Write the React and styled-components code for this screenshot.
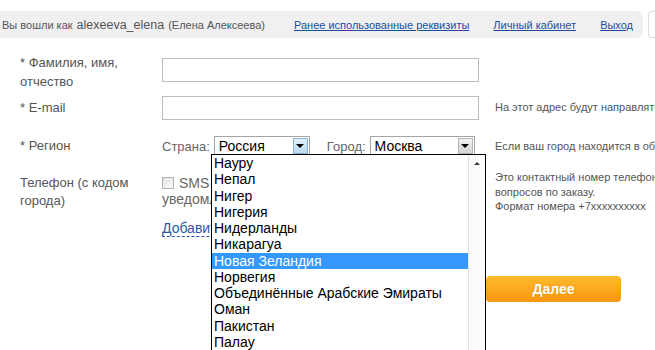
import React from 'react';
import styled, { createGlobalStyle } from 'styled-components';

const GlobalStyle = createGlobalStyle`
  html, body {
    margin: 0;
    padding: 0;
    background: #fff;
    overflow: hidden;
  }
  body {
    font-family: 'Liberation Sans', Arial, sans-serif;
    width: 655px;
    height: 350px;
  }
`;

const Page = styled.div`
  position: relative;
  width: 655px;
  height: 350px;
  overflow: hidden;
`;

const TopRow = styled.div`
  display: flex;
  align-items: stretch;
  gap: 5px;
  margin-top: 11px;
`;

const TopBar = styled.div`
  display: flex;
  align-items: center;
  width: 643px;
  height: 27px;
  padding-left: 2px;
  box-sizing: border-box;
  background: #f0f0f0;
  border-radius: 0 6px 6px 0;
  font-size: 11px;
  color: #555;
  white-space: nowrap;
`;

const UserName = styled.span`
  font-size: 12.5px;
  margin: 0 4px 0 4px;
`;

const TopLinks = styled.div`
  display: flex;
  gap: 24px;
  margin-left: 29px;
`;

const TopLink = styled.a`
  color: #1d4e9e;
  text-decoration: underline;
  font-size: 11px;
`;

const Stub = styled.div`
  flex: 1;
  border: 1px solid #ddd;
  border-right: none;
  border-radius: 4px 0 0 4px;
`;

const Form = styled.div`
  padding-left: 20px;
`;

const Row = styled.div`
  display: grid;
  grid-template-columns: 142px 325px 1fr;
  align-items: start;
  margin-top: ${p => p.$gap}px;
`;

const Label = styled.div`
  font-size: 13px;
  color: #555;
  line-height: ${p => p.$lh || 19}px;
`;

const TextInput = styled.div`
  width: 317px;
  height: 24px;
  box-sizing: border-box;
  border: 1px solid #bdbdbd;
  margin-top: ${p => p.$top || 0}px;
  background: #fff;
`;

const Hint = styled.div`
  font-size: 11px;
  color: #555;
  padding-left: 8px;
  white-space: nowrap;
  line-height: ${p => p.$lh || 23}px;
  margin-top: ${p => p.$top || 0}px;
`;

const RegionLine = styled.div`
  display: flex;
  align-items: center;
  height: 20px;
  font-size: 13px;
  color: #666;
  white-space: nowrap;
`;

const FieldCaption = styled.span`
  margin-left: ${p => p.$ml || 0}px;
  margin-right: 4px;
`;

const Select = styled.div`
  display: flex;
  align-items: center;
  justify-content: space-between;
  width: ${p => p.$w}px;
  height: 20px;
  box-sizing: border-box;
  border: 1px solid #a5a5a5;
  padding: 0 1px 0 4px;
  background: #fff;
  font-size: 14px;
  color: #000;
`;

const ArrowBtn = styled.div`
  width: 15px;
  height: 16px;
  box-sizing: border-box;
  display: flex;
  align-items: center;
  justify-content: center;
  border: 1px solid ${p => (p.$active ? '#8ab4d6' : '#b4b4b4')};
  background: ${p => (p.$active ? 'linear-gradient(#dff0fb, #b9dbf1)' : 'linear-gradient(#f2f2f2, #d4d4d4)')};
  &::after {
    content: '';
    border-left: 4px solid transparent;
    border-right: 4px solid transparent;
    border-top: 4px solid #000;
  }
`;

const Phone = styled.div`
  font-size: 14px;
  color: #666;
  line-height: 16px;
`;

const CheckLine = styled.div`
  display: flex;
  align-items: center;
  gap: 5px;
  height: 17px;
`;

const Check = styled.span`
  width: 12px;
  height: 12px;
  box-sizing: border-box;
  border: 1px solid #b0b0b0;
  background: linear-gradient(135deg, #e4e4e4, #fafafa);
`;

const AddLink = styled.span`
  display: inline-block;
  margin-top: 14px;
  color: #2b57a6;
  border-bottom: 1px dashed #2b57a6;
  line-height: 15px;
`;

const NextButton = styled.div`
  width: 135px;
  height: 26px;
  margin-left: -1px;
  border-radius: 4px;
  background: linear-gradient(#ffbb2c, #f7960f);
  color: #fff;
  font-size: 14px;
  font-weight: bold;
  display: flex;
  align-items: center;
  justify-content: center;
  text-shadow: 0 0 1px rgba(150, 80, 0, 0.4);
`;

const DropList = styled.div`
  position: absolute;
  left: 211px;
  top: 154px;
  width: 275px;
  height: 210px;
  box-sizing: border-box;
  border: 1px solid #000;
  background: #fff;
  display: flex;
`;

const Options = styled.div`
  flex: 1;
`;

const Option = styled.div`
  font-size: 14px;
  line-height: 16.25px;
  height: 16.25px;
  padding-left: 2px;
  color: ${p => (p.$selected ? '#fff' : '#000')};
  background: ${p => (p.$selected ? '#3399ff' : 'transparent')};
  white-space: nowrap;
`;

const Scroll = styled.div`
  width: 16px;
  border-left: 1px solid #e2e2e2;
  background: #fbfbfb;
  display: flex;
  flex-direction: column;
  align-items: center;
`;

const ScrollUp = styled.div`
  width: 14px;
  height: 16px;
  display: flex;
  align-items: center;
  justify-content: center;
  &::after {
    content: '';
    border-left: 3px solid transparent;
    border-right: 3px solid transparent;
    border-bottom: 3px solid #333;
  }
`;

const countries = [
  'Науру',
  'Непал',
  'Нигер',
  'Нигерия',
  'Нидерланды',
  'Никарагуа',
  'Новая Зеландия',
  'Норвегия',
  'Объединённые Арабские Эмираты',
  'Оман',
  'Пакистан',
  'Палау',
];

export default function App() {
  return (
    <Page>
      <GlobalStyle />
      <TopRow>
        <TopBar>
          Вы вошли как<UserName>alexeeva_elena</UserName>(Елена Алексеева)
          <TopLinks>
            <TopLink>Ранее использованные реквизиты</TopLink>
            <TopLink>Личный кабинет</TopLink>
            <TopLink>Выход</TopLink>
          </TopLinks>
        </TopBar>
        <Stub />
      </TopRow>

      <Form>
        <Row $gap={15}>
          <Label>* Фамилия, имя,<br />отчество</Label>
          <TextInput $top={5} />
        </Row>
        <Row $gap={5}>
          <Label $lh={23}>* E-mail</Label>
          <TextInput />
          <Hint>На этот адрес будут направляться уведомления</Hint>
        </Row>
        <Row $gap={16}>
          <Label $lh={20}>* Регион</Label>
          <RegionLine>
            <FieldCaption>Страна:</FieldCaption>
            <Select $w={96}>
              Россия
              <ArrowBtn $active />
            </Select>
            <FieldCaption $ml={17}>Город:</FieldCaption>
            <Select $w={105}>
              Москва
              <ArrowBtn />
            </Select>
          </RegionLine>
          <Hint $lh={20}>Если ваш город находится в области</Hint>
        </Row>
        <Row $gap={18}>
          <Label $lh={18}>Телефон (с кодом<br />города)</Label>
          <Phone>
            <CheckLine>
              <Check />
              SMS
            </CheckLine>
            уведомления
            <br />
            <AddLink>Добавить</AddLink>
          </Phone>
          <Hint $lh={14.5} $top={-4}>
            Это контактный номер телефона для<br />
            вопросов по заказу.<br />
            Формат номера +7xxxxxxxxxx
          </Hint>
        </Row>
        <Row $gap={39}>
          <div />
          <div />
          <NextButton>Далее</NextButton>
        </Row>
      </Form>

      <DropList>
        <Options>
          {countries.map(c => (
            <Option key={c} $selected={c === 'Новая Зеландия'}>
              {c}
            </Option>
          ))}
        </Options>
        <Scroll>
          <ScrollUp />
        </Scroll>
      </DropList>
    </Page>
  );
}
